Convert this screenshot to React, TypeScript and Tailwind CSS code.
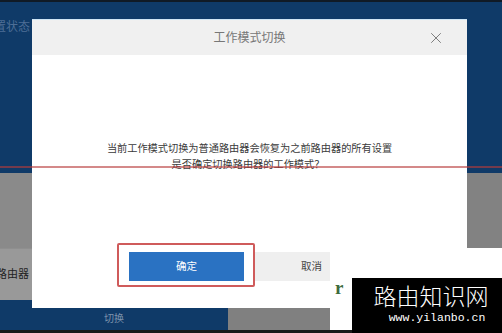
import { X } from 'lucide-react';

const cjk = { fontFamily: '"Liberation Sans", "Noto Sans CJK SC", sans-serif' };

export default function App() {
  return (
    <div className="relative w-[502px] h-[333px] overflow-hidden bg-white" style={cjk}>
      {/* ---------------- background page ---------------- */}
      <div className="flex flex-col w-full h-full">
        <div className="h-[2px] bg-[#101a26]" />
        <div className="h-[171px] bg-[#0f3a68] pt-[18px]">
          <span className="block -ml-[6px] text-[12px] leading-[14px] text-[#4e6e96]">置状态</span>
        </div>
        <div className="flex h-[75px]">
          <div className="flex-1 bg-[#8a8a8a]" />
          <div className="w-[36px] bg-[#828282]" />
        </div>
        <div className="flex h-[52px]">
          <div className="w-[40px] bg-[#999999] border-t border-[#8f8f8f] flex items-center">
            <span className="-ml-[4px] text-[11px] text-[#222]">路由器</span>
          </div>
          <div className="flex-1 bg-white" />
        </div>
        <div className="flex h-[30px]">
          <div className="w-[228px] bg-[#0f3a68] flex items-center justify-center pt-[6px]">
            <span className="text-[10px] text-[#7d93ad]">切换</span>
          </div>
          <div className="w-[102px] bg-[#808080]" />
          <div className="flex-1 bg-white" />
        </div>
        <div className="flex-1 bg-[#1a1a1a]" />
      </div>

      {/* ---------------- modal ---------------- */}
      <div className="absolute left-[32px] top-[19px] w-[435px] h-[289px] bg-white border-t border-[#cfe5f5] flex flex-col">
        <div className="h-[35px] bg-[#f0f0f0] flex items-center justify-center relative">
          <span className="text-[12px] text-[#777]">工作模式切换</span>
          <X className="absolute right-[22px] top-[9px] w-[18px] h-[18px] text-[#7a7a7a]" strokeWidth={1.3} />
        </div>
        <div className="pt-[86px] flex flex-col items-center text-[10.2px] leading-[16px] text-[#3a3a3a]">
          <p>当前工作模式切换为普通路由器会恢复为之前路由器的所有设置</p>
          <p className="-ml-[3px]">是否确定切换路由器的工作模式？</p>
        </div>
        <div className="flex items-start pl-[85px] mt-[70px]">
          <div className="w-[138px] h-[44px] border-2 border-[#cf5b5b] rounded-[2px] pl-[10px] pr-[9px] pt-[7px]">
            <div className="h-[29px] bg-[#2a72c2] flex items-center justify-center text-[10.5px] text-white">确定</div>
          </div>
          <div className="w-[75px] h-[29px] mt-[9px] bg-[#efefef] flex items-center justify-end pr-[8px] text-[10.5px] text-[#444]">
            取消
          </div>
        </div>
      </div>

      {/* red annotation line */}
      <div className="absolute left-0 right-0 top-[166px] h-[2px] bg-[#b83a3a]/60" />

      {/* watermark */}
      <span className="absolute left-[335px] top-[277px] text-[19px] leading-[22px] font-bold text-[#3d6b3d]" style={{ fontFamily: '"Liberation Serif", serif' }}>
        r
      </span>
      <div className="absolute right-0 bottom-0 w-[150px] h-[55px] bg-black flex flex-col items-center pt-[4px]">
        <span className="ml-[8px] text-[23px] leading-[26px] font-light text-white" style={{ fontFamily: '"Noto Sans CJK SC", sans-serif' }}>
          路由知识网
        </span>
        <span className="ml-[20px] mt-[4px] text-[11.5px] leading-[12px] text-white" style={{ fontFamily: '"Liberation Mono", monospace' }}>
          www.yilanbo.cn
        </span>
      </div>
    </div>
  );
}
